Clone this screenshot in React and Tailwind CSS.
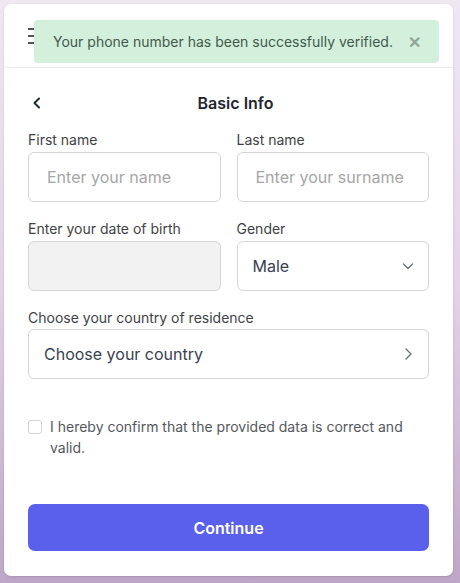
import React, { useState } from "react"

const Field = ({ label, children, className = "" }) => (
    <div className={"flex flex-col " + className}>
        <label className="text-[14px] leading-5 text-[#3f4246] mb-[2px]">{label}</label>
        {children}
    </div>
)

const ChevronDown = () => (
    <svg width="16" height="16" viewBox="0 0 16 16" fill="none" stroke="#6b7280" strokeWidth="1.4" strokeLinecap="round" strokeLinejoin="round">
        <path d="M3.5 6l4.5 4.5L12.5 6" />
    </svg>
)

const ChevronRight = () => (
    <svg width="16" height="16" viewBox="0 0 16 16" fill="none" stroke="#6b7280" strokeWidth="1.4" strokeLinecap="round" strokeLinejoin="round">
        <path d="M6 3l5 5-5 5" />
    </svg>
)

const App = () => {
    const [checked, setChecked] = useState(false)

    return (
        <div className="min-h-[583px] w-[460px] p-1 bg-gradient-to-b from-[#efe8f2] via-[#e2d3e6] to-[#bea6c8] font-['Inter',sans-serif]">
            <div className="relative h-[572px] w-[449px] bg-white rounded-[7px] shadow-sm flex flex-col">
                <div className="h-[64px] border-b border-[#eeeeee] flex items-center px-6 shrink-0">
                    <div className="flex flex-col gap-[5px]">
                        <span className="block w-[8px] h-[2px] bg-[#555]" />
                        <span className="block w-[8px] h-[2px] bg-[#555]" />
                        <span className="block w-[8px] h-[2px] bg-[#555]" />
                    </div>
                </div>

                <div className="absolute left-[30px] top-[16px] w-[405px] h-[43px] rounded-[4px] bg-[#d3f0dc] flex items-center justify-between pl-[19px] pr-[18px]">
                    <span className="text-[14px] text-[#44594c]">Your phone number has been successfully verified.</span>
                    <span className="text-[#95a59b] text-[16px] font-bold leading-none">✕</span>
                </div>

                <div className="flex-1 flex flex-col px-6">
                    <div className="relative flex items-center justify-center h-[24px] mt-[23px]">
                        <svg className="absolute left-[2px]" width="14" height="14" viewBox="0 0 14 14" fill="none" stroke="#1f2937" strokeWidth="2" strokeLinecap="round" strokeLinejoin="round">
                            <path d="M9 2.5L4.5 7 9 11.5" />
                        </svg>
                        <h1 className="text-[16px] font-semibold text-[#23262e] ml-[14px]">Basic Info</h1>
                    </div>

                    <div className="grid grid-cols-2 gap-x-4 mt-[15px]">
                        <Field label="First name">
                            <input placeholder="Enter your name" className="h-[50px] w-full rounded-[6px] border border-[#d6d6d6] px-[18px] text-[16px] text-[#374151] placeholder:text-[#a6a6a6] outline-none" />
                        </Field>
                        <Field label="Last name">
                            <input placeholder="Enter your surname" className="h-[50px] w-full rounded-[6px] border border-[#d6d6d6] px-[18px] text-[16px] text-[#374151] placeholder:text-[#a6a6a6] outline-none" />
                        </Field>
                    </div>

                    <div className="grid grid-cols-2 gap-x-4 mt-[17px]">
                        <Field label="Enter your date of birth">
                            <div className="h-[50px] w-full rounded-[6px] border border-[#d6d6d6] bg-[#f2f2f2]" />
                        </Field>
                        <Field label="Gender">
                            <button className="h-[50px] w-full rounded-[6px] border border-[#d6d6d6] flex items-center justify-between pl-[15px] pr-[12px] text-[16px] text-[#374151]">
                                <span>Male</span>
                                <ChevronDown />
                            </button>
                        </Field>
                    </div>

                    <Field label="Choose your country of residence" className="mt-[17px]">
                        <button className="h-[50px] w-full rounded-[6px] border border-[#d6d6d6] flex items-center justify-between pl-[15px] pr-[12px] text-[16px] text-[#374151] -mt-[1px]">
                            <span>Choose your country</span>
                            <ChevronRight />
                        </button>
                    </Field>

                    <label className="flex items-start gap-[8px] mt-[37px] cursor-pointer">
                        <input type="checkbox" checked={checked} onChange={() => setChecked(!checked)} className="appearance-none mt-[4px] w-[14px] h-[14px] rounded-[3px] border border-[#d4d4d4] shrink-0" />
                        <span className="text-[14px] leading-[21px] text-[#55585d] pr-4">I hereby confirm that the provided data is correct and valid.</span>
                    </label>

                    <button className="mt-auto mb-[25px] h-[47px] w-full rounded-[7px] bg-[#5b60ec] text-white text-[16px] font-semibold">
                        Continue
                    </button>
                </div>
            </div>
        </div>
    )
}

export default App
